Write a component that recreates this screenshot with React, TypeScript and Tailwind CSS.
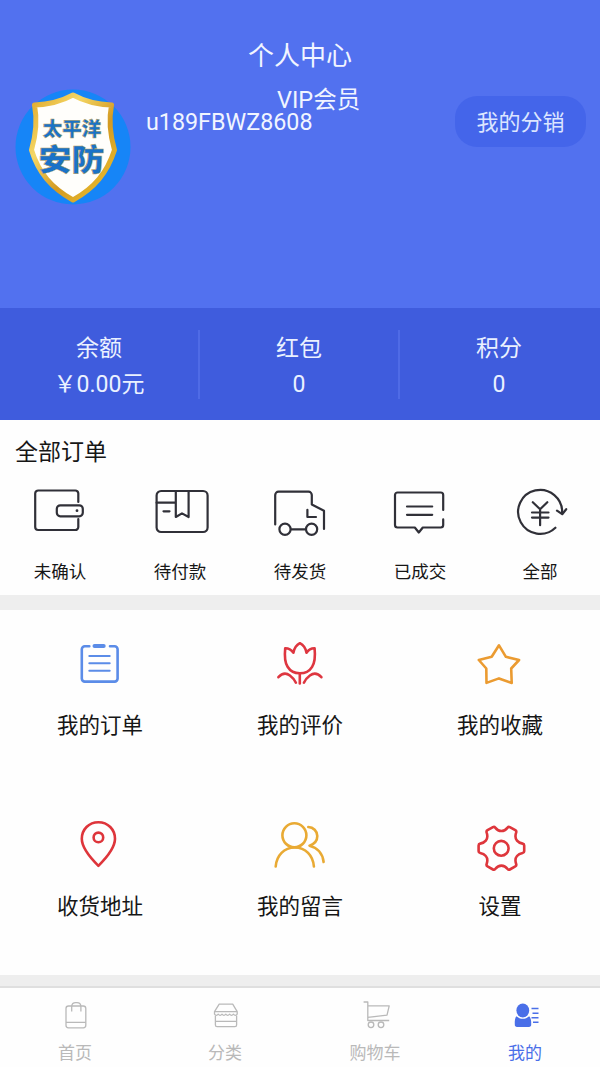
import type { ReactNode } from "react";

type Item = {
  label: string;
  icon: ReactNode;
};

const balances = [
  { label: "余额", value: "￥0.00元" },
  { label: "红包", value: "0" },
  { label: "积分", value: "0" },
];

const orders: Item[] = [
  {
    label: "未确认",
    icon: (
      <>
        <path d="M48.3 16V7.5a3 3 0 0 0-3-3H8.2a3 3 0 0 0-3 3v33.5a3 3 0 0 0 3 3h37.1a3 3 0 0 0 3-3V33" />
        <rect x="26.8" y="19.3" width="26" height="11" rx="3.5" />
        <circle cx="47" cy="24.7" r="1.4" fill="currentColor" stroke="none" />
      </>
    ),
  },
  {
    label: "待付款",
    icon: (
      <>
        <rect x="6.6" y="5" width="51" height="41" rx="4.5" />
        <path d="M6.6 16.7h19.2M25.8 5v26l6.2-3.6 6.6 3.6V5M13.5 25.3h6" />
      </>
    ),
  },
  {
    label: "待发货",
    icon: (
      <>
        <path d="M5.2 38.5V9a3.3 3.3 0 0 1 3.3-3.3h30A3.3 3.3 0 0 1 41.8 9v9.5L54 24.8V43" />
        <path d="M37.4 23.8v7.2H46M21 43.4h14.5" />
        <circle cx="15" cy="43.3" r="5.6" />
        <circle cx="41.6" cy="43.3" r="5.6" />
      </>
    ),
  },
  {
    label: "已成交",
    icon: (
      <>
        <path d="M53.2 24V9a2.5 2.5 0 0 0-2.5-2.5H7.5A2.5 2.5 0 0 0 5 9v30a2.5 2.5 0 0 0 2.5 2.5h17.3l4 5 4-5h17.9a2.5 2.5 0 0 0 2.5-2.5v-5.6" />
        <path d="M17 20.5h25.2M17 28.8h25.2" />
      </>
    ),
  },
  {
    label: "全部",
    icon: (
      <>
        <path d="M45.4 41.7A22 22 0 1 1 52.1 27" />
        <path d="M47 24.6l5.2 3.6 4-5" />
        <path d="M22.8 16.2l7.3 7 7.2-7M22 26.5h16.5M22 31.6h16.5M30.1 23.2v16" />
      </>
    ),
  },
];

const services: (Item & { color: string })[] = [
  {
    label: "我的订单",
    color: "text-[#5b8ce8]",
    icon: (
      <>
        <path d="M19.3 12.2h-4.5a3 3 0 0 0-3 3v29.4a3 3 0 0 0 3 3h29.800a3 3 0 0 0 3-3V15.200a3 3 0 0 0-3-3H40" />
        <path d="M24.5 12h9.2" strokeWidth="4" />
        <path d="M19.3 22h20.4M19.3 29.3h20.4M19.3 36.7h20.4" strokeWidth="2" />
      </>
    ),
  },
  {
    label: "我的评价",
    color: "text-[#de3640]",
    icon: (
      <>
        <path d="M23.400 18.700c-2.200-3-4.600-4.500-8.200-4.400-.8 8-.6 13.700 2.400 18.500 2.600 4.300 7 6.500 12.200 6.500s9.700-2.200 12.300-6.500c3-4.800 3.300-10.500 2.500-18.500-3.500-.1-6 1.400-8.100 4.400-.9-4.500-3-7.700-6.600-9.500-3.500 1.800-5.600 5-6.500 9.500z" />
        <path d="M29.800 39.500v10M8.400 43.200c3.500-3.800 7.800-4.400 11.500-1.700 2.700 2 4.600 4.300 6 7.200M51.400 43.200c-3.500-3.800-7.800-4.400-11.500-1.700-2.700 2-4.600 4.300-6 7.200" />
      </>
    ),
  },
  {
    label: "我的收藏",
    color: "text-[#eb9b31]",
    icon: (
      <path d="M29 11.300l6.900 11.500 13.200 3.200-7.900 8.500.5 14.400L29 44.400l-12.500 4.500-.2-14.400L8.800 26l12.900-3.200z" />
    ),
  },
  {
    label: "收货地址",
    color: "text-[#de353b]",
    icon: (
      <>
        <path d="M28.400 7.200c-9.500 0-16.600 7.300-16.600 16.600 0 9.200 8.200 18.700 16.600 27 8.400-8.300 16.600-17.800 16.600-27 0-9.300-7.100-16.600-16.600-16.600z" />
        <circle cx="28.4" cy="22.4" r="4.8" />
      </>
    ),
  },
  {
    label: "我的留言",
    color: "text-[#e9aa34]",
    icon: (
      <>
        <circle cx="24.4" cy="20.3" r="12" />
        <path d="M5.700 51.500c.8-11 8.400-19 19.100-19s18.300 8 19.100 19" />
        <path d="M38.300 12c5 .2 9 4 9 9.100 0 4.500-2.800 8-7.800 9.600 7.700 1.800 13.200 7.700 14.100 16.300" />
      </>
    ),
  },
  {
    label: "设置",
    color: "text-[#de363c]",
    icon: (
      <>
        <path d="M25.200 12.600c1.800 2.300 3.800 3.400 6.200 3.400s4.400-1.100 6.200-3.400c.6-.8 1.300-1 2.200-.5l5.500 3.100c.9.500 1.200 1.200.9 2.200-1.200 3.400-.9 6.200.8 8.200 1.200 1.500 3 2.500 5.600 3 1.100.2 1.600.8 1.600 1.800v5.800c0 1-.5 1.600-1.600 1.800-2.600.5-4.400 1.500-5.600 3-1.700 2-2 4.800-.8 8.200.3 1 0 1.700-.9 2.200l-5.500 3.100c-.9.500-1.600.3-2.200-.5-1.800-2.300-3.800-3.400-6.200-3.400s-4.400 1.100-6.200 3.400c-.6.8-1.300 1-2.200.5l-5.500-3.100c-.9-.5-1.200-1.200-.9-2.200 1.200-3.400.9-6.200-.8-8.200-1.200-1.500-3-2.500-5.600-3-1.100-.2-1.600-.8-1.600-1.800v-5.800c0-1 .5-1.600 1.600-1.800 2.600-.5 4.400-1.500 5.600-3 1.700-2 2-4.800.8-8.200-.3-1 0-1.700.9-2.200l5.500-3.100c.9-.5 1.600-.3 2.200.5z" />
        <circle cx="31.2" cy="33.300" r="7.400" />
      </>
    ),
  },
];

const tabs: (Item & { active?: boolean })[] = [
  {
    label: "首页",
    icon: (
      <>
        <rect x="7" y="6" width="19.8" height="21.8" rx="2.5" />
        <path d="M7 22.4h19.8M12.7 11.5V6.500a4 4 0 0 1 4-3.800h1.200a4 4 0 0 1 4 3.800v5" />
      </>
    ),
  },
  {
    label: "分类",
    icon: (
      <>
        <path d="M10.200 4.200h13.500l4.500 7.500v2.500c-1.200 1.500-2.600 1.500-3.800 0-1.200 1.500-2.600 1.500-3.800 0-1.200 1.500-2.600 1.500-3.800 0-1.200 1.500-2.600 1.500-3.800 0-1.200 1.500-2.600 1.500-3.800 0-1.200 1.500-2.500 1.500-3.700 0v-2.500zM5.300 11.700h22.900" />
        <path d="M6.400 15.500V25a1.600 1.600 0 0 0 1.600 1.600h18a1.600 1.600 0 0 0 1.600-1.600v-9.500M6.400 21.300h21.200" />
      </>
    ),
  },
  {
    label: "购物车",
    icon: (
      <>
        <path d="M4.600 2h4.200v18.500h21.400M8.800 5.800h21.400L28 15.200 8.800 17.300" />
        <circle cx="12" cy="24.8" r="2.8" />
        <circle cx="22" cy="24.8" r="2.8" />
      </>
    ),
  },
  {
    label: "我的",
    active: true,
    icon: (
      <>
        <ellipse cx="13.8" cy="10.5" rx="6.4" ry="7" fill="currentColor" stroke="none" />
        <path
          d="M7.500 16.200c3.500 3.400 9.100 3.400 12.600 0 1.700 1.400 2.300 4.300 2.100 8.500 0 1.400-.8 2.200-2.200 2.200H8c-1.400 0-2.200-.8-2.200-2.200-.2-4.200.2-7.100 1.700-8.500z"
          fill="currentColor"
          stroke="none"
        />
        <path d="M22.500 8.500h7M23.500 13.300h6M22.500 17.700h7M24 22.300h5.500" strokeWidth="1.5" />
      </>
    ),
  },
];

const Avatar = () => (
  <svg className="size-[120px] shrink-0" viewBox="0 0 120 120">
    <defs>
      <linearGradient id="gold" x1="0" y1="0" x2="1" y2="1">
        <stop offset="0" stopColor="#e0a72a" />
        <stop offset="0.3" stopColor="#f5d765" />
        <stop offset="0.6" stopColor="#d39a22" />
        <stop offset="1" stopColor="#f0c52f" />
      </linearGradient>
    </defs>
    <circle cx="60" cy="60" r="57.5" fill="#1685f7" />
    <path
      d="M60 8c-11 6-24 9.500-38.500 10 2.500 13 2.500 26-3 45 7 23 20 38 41.500 50 21.500-12 34-27 41.500-50-5.500-19-5.500-32-3-45C84 17.500 71 14 60 8z"
      fill="#fffefb"
      stroke="url(#gold)"
      strokeWidth="5"
      strokeLinejoin="round"
    />
    <g
      fill="#1a72c8"
      stroke="#b5a05a"
      strokeWidth="0.5"
      textAnchor="middle"
      className="font-['Noto_Sans_CJK_SC',sans-serif] font-black"
    >
      <text x="59" y="49" fontSize="19.5">
        太平洋
      </text>
      <text x="58.5" y="83" fontSize="30" textLength="66" lengthAdjust="spacingAndGlyphs">
        安防
      </text>
    </g>
  </svg>
);

export default function App() {
  return (
    <div className="flex h-[1067px] w-[600px] flex-col overflow-hidden bg-[#fefefe] font-[Roboto,'Noto_Sans_CJK_SC',sans-serif] text-[#161616]">
      {/* Header */}
      <header className="h-[308px] bg-[#5271ef] pt-10 text-[#f1f5ff]">
        <h1 className="text-center text-[26px] leading-8">个人中心</h1>
        <div className="mt-[15px] flex items-start pl-[13px] pr-3.5">
          <Avatar />
          <div className="ml-[13px] flex flex-1 flex-col">
            <span className="pl-[131px] pt-px text-[23.5px] leading-6">VIP会员</span>
            <span className="-mt-0.5 text-[23.3px] leading-6">u189FBWZ8608</span>
          </div>
          <button className="mt-[9px] h-[51px] w-[131px] rounded-[22px] bg-[#4465ea] pt-0.5 text-[22px] text-[#dce5ff]">
            我的分销
          </button>
        </div>
      </header>

      {/* Balances */}
      <section className="grid h-28 grid-cols-3 bg-[#3f5cdd] py-[22px] text-[23px] text-[#eaf1ff]">
        {balances.map((item) => (
          <div
            key={item.label}
            className="flex h-[69px] flex-col items-center border-r-2 border-[#4f6be6] pt-px leading-9 last:border-transparent"
          >
            <span>{item.label}</span>
            <span>{item.value}</span>
          </div>
        ))}
      </section>

      {/* Orders */}
      <section className="h-[175px]">
        <h2 className="px-[15px] pt-[17px] text-[23px] leading-8">全部订单</h2>
        <div className="mt-[17px] grid grid-cols-5">
          {orders.map((item) => (
            <div key={item.label} className="flex flex-col items-center">
              <svg
                className="h-[50px] w-[60px] text-[#303038]"
                viewBox="0 0 60 50"
                fill="none"
                stroke="currentColor"
                strokeWidth="2.2"
                strokeLinecap="round"
                strokeLinejoin="round"
              >
                {item.icon}
              </svg>
              <span className="mt-6 text-[17.5px] leading-6">{item.label}</span>
            </div>
          ))}
        </div>
      </section>

      <div className="h-[15px] bg-[#eeeeee]" />

      {/* Services */}
      <section className="grid h-[365px] grid-cols-3 grid-rows-[181px_180px] pt-6">
        {services.map((item) => (
          <div key={item.label} className="flex flex-col items-center">
            <svg
              className={`size-[60px] ${item.color}`}
              viewBox="0 0 60 60"
              fill="none"
              stroke="currentColor"
              strokeWidth="2.6"
              strokeLinecap="round"
              strokeLinejoin="round"
            >
              {item.icon}
            </svg>
            <span className="mt-4 text-[21.5px] leading-8">{item.label}</span>
          </div>
        ))}
      </section>

      <div className="h-[13px] border-b-2 border-[#dfdfdf] bg-[#eeeeee]" />

      {/* Tab bar */}
      <nav className="grid flex-1 grid-cols-4 pt-3">
        {tabs.map((tab) => (
          <div
            key={tab.label}
            className={`flex flex-col items-center ${tab.active ? "text-[#4a6fe8]" : "text-[#b9b9b9]"}`}
          >
            <svg
              className="size-8"
              viewBox="0 0 32 32"
              fill="none"
              stroke="currentColor"
              strokeWidth="1.3"
              strokeLinejoin="round"
            >
              {tab.icon}
            </svg>
            <span className="mt-[9px] text-[17px] leading-6">{tab.label}</span>
          </div>
        ))}
      </nav>
    </div>
  );
}
